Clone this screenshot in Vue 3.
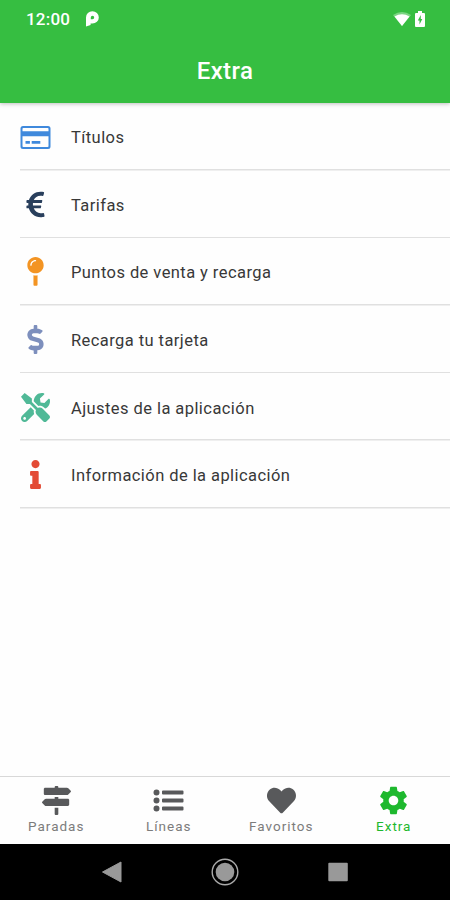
<template>
  <div class="screen">
    <header class="header">
      <div class="status-bar">
        <span class="clock">12:00</span>
        <svg class="status-p" viewBox="0 0 13 16">
          <path
            d="M0 15.5V6.4A6.4 6.2 0 1 1 6.4 12.6H4.6V14ZM6.5 4.8A1.7 1.7 0 0 0 4.8 6.5V8.2H6.5A1.7 1.7 0 0 0 6.5 4.8Z"
            fill="currentColor"
            fill-rule="evenodd"
          />
        </svg>
        <div class="status-icons">
          <svg class="wifi" viewBox="0 0 18 14">
            <path d="M0 3Q9-3 18 3L9 14Z" fill="currentColor" opacity="0.35" />
            <path d="M1.5 4.6Q9 0 16.5 4.6L9 14Z" fill="currentColor" />
          </svg>
          <svg class="battery" viewBox="0 0 10 16">
            <path
              d="M3 0h4v2h2q1 0 1 1v12q0 1-1 1H1q-1 0-1-1V3q0-1 1-1h2ZM5.8 4L2.8 9.4h1.7V13.5L7.3 8H5.8Z"
              fill="currentColor"
              fill-rule="evenodd"
            />
          </svg>
        </div>
      </div>
      <h1 class="title">Extra</h1>
    </header>

    <ul class="list">
      <li v-for="item in items" :key="item.label" class="row">
        <svg class="row-icon" :class="item.icon" :viewBox="item.viewBox">
          <path :d="item.path" fill="currentColor" fill-rule="evenodd" />
        </svg>
        <div class="row-label">{{ item.label }}</div>
      </li>
    </ul>

    <nav class="tabs">
      <button
        v-for="tab in tabs"
        :key="tab.label"
        class="tab"
        :class="{ active: tab.label === current }"
        @click="current = tab.label"
      >
        <svg class="tab-icon" :viewBox="tab.viewBox">
          <path :d="tab.path" fill="currentColor" />
        </svg>
        <span>{{ tab.label }}</span>
      </button>
    </nav>

    <div class="system-nav">
      <svg viewBox="0 0 30 30">
        <path d="M4.5 15L23 5v20Z" fill="#999" stroke="#999" stroke-linejoin="round" />
      </svg>
      <svg viewBox="0 0 30 30">
        <circle cx="15" cy="15" r="12.8" fill="none" stroke="#aaa" stroke-width="1.4" />
        <circle cx="15" cy="15" r="9.3" fill="#999" />
      </svg>
      <svg viewBox="0 0 30 30">
        <rect x="5.3" y="5.8" width="19.5" height="18.5" rx="1" fill="#999" />
      </svg>
    </div>
  </div>
</template>

<script setup>
import { ref } from "vue";

const current = ref("Extra");

const items = [
  {
    label: "Títulos",
    icon: "card",
    viewBox: "0 0 30 29",
    path: "M2.5 4h25q2.5 0 2.5 2.5v18q0 2.5-2.5 2.5h-25Q0 27 0 24.5v-18Q0 4 2.5 4ZM2.8 6q-.8 0-.8.8v2.4h26V6.8q0-.8-.8-.8ZM2 14.2v10q0 .8.8.8h24.4q.8 0 .8-.8v-10ZM5 19h4.4v2.8H5ZM11.2 19h8.6v2.8h-8.6Z",
  },
  {
    label: "Tarifas",
    icon: "euro",
    viewBox: "0 0 320 512",
    path: "M310.706 413.765c-1.314-6.63-7.835-10.872-14.424-9.369-10.692 2.439-27.422 5.413-45.426 5.413-56.763 0-101.929-34.79-121.461-85.449h113.689a12 12 0 0 0 11.708-9.369l6.373-28.36c1.686-7.502-4.019-14.631-11.708-14.631H115.22c-1.21-14.328-1.414-28.287.137-42.245H261.95a12 12 0 0 0 11.723-9.434l6.512-29.755c1.638-7.484-4.061-14.566-11.723-14.566H130.184c20.633-44.991 62.69-75.03 117.619-75.03 14.486 0 28.564 2.25 37.851 4.145 6.216 1.268 12.347-2.498 14.002-8.623l11.991-44.368c1.822-6.741-2.465-13.616-9.326-14.917C290.217 34.912 270.71 32 249.635 32 152.451 32 74.03 92.252 45.075 176H12c-6.627 0-12 5.373-12 12v29.755c0 6.627 5.373 12 12 12h21.569c-1.009 13.607-1.181 29.287-.181 42.245H12c-6.627 0-12 5.373-12 12v28.36c0 6.627 5.373 12 12 12h30.114C67.139 414.692 145.264 480 249.635 480c26.301 0 48.562-4.544 61.101-7.788 6.167-1.595 10.027-7.708 8.788-13.957l-8.818-44.49z",
  },
  {
    label: "Puntos de venta y recarga",
    icon: "pin",
    viewBox: "0 0 288 512",
    path: "M108 322V490q0 16 16 16H164q16 0 16-16V322c-12 3-24 4-36 4s-24-1-36-4zM144 0C64.47 0 0 64.47 0 144s64.47 144 144 144 144-64.47 144-144S223.53 0 144 0zm0 76c-37.5 0-68 30.5-68 68 0 6.62-5.38 12-12 12s-12-5.38-12-12c0-50.73 41.28-92 92-92 6.62 0 12 5.38 12 12s-5.38 12-12 12z",
  },
  {
    label: "Recarga tu tarjeta",
    icon: "dollar",
    viewBox: "0 0 288 512",
    path: "M209.2 233.4l-108-31.6C88.7 198.2 80 186.5 80 173.5c0-16.3 13.2-29.5 29.5-29.5h66.3c12.2 0 24.2 3.7 34.2 10.5 6.1 4.1 14.3 3.1 19.5-2l34.8-34c7.1-6.9 6.1-18.4-1.8-24.5C238 74.8 207.4 64.1 176 64V16c0-8.8-7.2-16-16-16h-32c-8.8 0-16 7.2-16 16v48h-2.5C45.8 64-5.4 118.7.5 183.6c4.2 46.1 39.4 83.6 83.8 96.6l102.5 30c12.5 3.7 21.2 15.3 21.2 28.3 0 16.3-13.2 29.5-29.5 29.5h-66.3C100 368 88 364.3 78 357.5c-6.1-4.1-14.3-3.1-19.5 2l-34.8 34c-7.1 6.9-6.1 18.4 1.8 24.5 24.5 19.2 55.1 29.9 86.5 30v48c0 8.8 7.2 16 16 16h32c8.8 0 16-7.2 16-16v-48.2c46.6-.9 90.3-28.6 105.7-72.7 21.5-61.6-14.6-124.8-72.5-141.7z",
  },
  {
    label: "Ajustes de la aplicación",
    icon: "tools",
    viewBox: "0 0 512 512",
    path: "M501.1 395.7L384 278.6c-23.1-23.1-57.6-27.6-85.4-13.9L192 158.1V96L64 0 0 64l96 128h62.1l106.6 106.6c-13.6 27.8-9.2 62.3 13.9 85.4l117.1 117.1c14.6 14.6 38.2 14.6 52.7 0l52.7-52.7c14.5-14.6 14.5-38.2 0-52.7zM331.7 225c28.3 0 54.9 11 74.9 31l19.4 19.4c15.8-6.9 30.8-16.5 43.8-29.5 37.1-37.1 49.7-89.3 37.9-136.7-2.2-9-13.5-12.1-20.1-5.5l-74.4 74.4-67.9-11.3L334 98.9l74.4-74.4c6.6-6.6 3.4-17.9-5.7-20.2-47.4-11.7-99.6.9-136.6 37.9-28.5 28.5-41.9 66.1-41.2 103.6l82.1 82.1c8.1-1.9 16.5-2.9 24.7-2.9zm-103.9 82l-56.7-56.7L18.7 402.8c-25 25-25 65.5 0 90.5s65.5 25 90.5 0l123.6-123.6c-7.6-19.9-9.9-41.6-5-62.7zM64 472c-13.2 0-24-10.8-24-24 0-13.3 10.7-24 24-24s24 10.7 24 24c0 13.2-10.7 24-24 24z",
  },
  {
    label: "Información de la aplicación",
    icon: "info",
    viewBox: "0 0 192 512",
    path: "M20 424.229h20V279.771H20c-11.046 0-20-8.954-20-20V212c0-11.046 8.954-20 20-20h112c11.046 0 20 8.954 20 20v212.229h20c11.046 0 20 8.954 20 20V492c0 11.046-8.954 20-20 20H20c-11.046 0-20-8.954-20-20v-47.771c0-11.046 8.954-20 20-20zM96 0C56.235 0 24 32.235 24 72s32.235 72 72 72 72-32.235 72-72S135.764 0 96 0z",
  },
];

const tabs = [
  {
    label: "Paradas",
    viewBox: "0 0 512 512",
    path: "M507.31 84.69L464 41.37c-6-6-14.14-9.37-22.63-9.37H288V16c0-8.84-7.16-16-16-16h-32c-8.84 0-16 7.16-16 16v16H56c-13.25 0-24 10.75-24 24v80c0 13.25 10.75 24 24 24h385.37c8.49 0 16.62-3.37 22.63-9.37l43.31-43.31c6.25-6.26 6.25-16.38 0-22.63zM224 496c0 8.84 7.16 16 16 16h32c8.84 0 16-7.16 16-16V384h-64v112zm232-272H288v-32h-64v32H70.63c-8.49 0-16.62 3.37-22.63 9.37L4.69 276.69c-6.25 6.25-6.25 16.38 0 22.63L48 342.63c6 6 14.14 9.37 22.63 9.37H456c13.25 0 24-10.75 24-24v-80c0-13.25-10.75-24-24-24z",
  },
  {
    label: "Líneas",
    viewBox: "0 0 30 29",
    path: "M0 6.5a3 3 0 1 0 6 0a3 3 0 1 0-6 0M0 14.5a3 3 0 1 0 6 0a3 3 0 1 0-6 0M0 22.5a3 3 0 1 0 6 0a3 3 0 1 0-6 0M9.5 4.6h19.5q1 0 1 1v1.8q0 1-1 1H9.5q-1 0-1-1V5.6q0-1 1-1M9.5 12.6h19.5q1 0 1 1v1.8q0 1-1 1H9.5q-1 0-1-1v-1.8q0-1 1-1M9.5 20.6h19.5q1 0 1 1v1.8q0 1-1 1H9.5q-1 0-1-1v-1.8q0-1 1-1",
  },
  {
    label: "Favoritos",
    viewBox: "0 0 512 512",
    path: "M462.3 62.6C407.5 15.9 326 24.3 275.7 76.2L256 96.5l-19.7-20.3C186.1 24.3 104.5 15.9 49.7 62.6c-62.8 53.6-66.1 149.8-9.9 207.9l193.5 199.8c12.5 12.9 32.8 12.9 45.3 0l193.5-199.8c56.3-58.1 53-154.3-9.8-207.9z",
  },
  {
    label: "Extra",
    viewBox: "1.4 1.4 21.2 21.2",
    path: "M19.43 12.98c.04-.32.07-.64.07-.98s-.03-.66-.07-.98l2.11-1.65c.19-.15.24-.42.12-.64l-2-3.46c-.12-.22-.39-.3-.61-.22l-2.49 1c-.52-.4-1.08-.73-1.69-.98l-.38-2.65C14.46 2.18 14.25 2 14 2h-4c-.25 0-.46.18-.49.42l-.38 2.65c-.61.25-1.17.59-1.69.98l-2.49-1c-.23-.09-.49 0-.61.22l-2 3.46c-.13.22-.07.49.12.64l2.11 1.65c-.04.32-.07.65-.07.98s.03.66.07.98l-2.11 1.65c-.19.15-.24.42-.12.64l2 3.46c.12.22.39.3.61.22l2.49-1c.52.4 1.08.73 1.69.98l.38 2.65c.03.24.24.42.49.42h4c.25 0 .46-.18.49-.42l.38-2.65c.61-.25 1.17-.59 1.69-.98l2.49 1c.23.09.49 0 .61-.22l2-3.46c.12-.22.07-.49-.12-.64l-2.11-1.65zM12 15.5c-1.93 0-3.5-1.57-3.5-3.5s1.57-3.5 3.5-3.5 3.5 1.57 3.5 3.5-1.57 3.5-3.5 3.5z",
  },
];
</script>

<style>
body {
  margin: 0;
  background: #fff;
}
</style>

<style scoped>
.screen {
  display: flex;
  flex-direction: column;
  width: 450px;
  height: 900px;
  overflow: hidden;
  background: #fefefe;
  font-family: Roboto, sans-serif;
}
.header {
  height: 103px;
  flex: none;
  color: #fff;
  background: #36be41;
  box-shadow: 0 1px 4px rgba(0, 0, 0, 0.25);
}
.status-bar {
  display: flex;
  align-items: center;
  height: 38px;
  padding: 0 25px 0 26px;
}
.clock {
  font-size: 17px;
  font-weight: 500;
  letter-spacing: 0.2px;
}
.status-p {
  width: 13px;
  height: 16px;
  margin-left: 16px;
}
.status-icons {
  display: flex;
  align-items: center;
  gap: 4px;
  margin-left: auto;
}
.wifi {
  width: 18px;
  height: 14px;
}
.battery {
  width: 10px;
  height: 16px;
}
.title {
  margin: 0;
  font-size: 24px;
  font-weight: 500;
  line-height: 67px;
  letter-spacing: 0.4px;
  text-align: center;
}
.list {
  flex: 1;
  margin: 0;
  padding: 0;
  list-style: none;
}
.row {
  display: flex;
  align-items: center;
  height: 67.6px;
  padding-left: 20px;
  background: linear-gradient(#e0e0e0, #e0e0e0) 20px 100% / 100% 1.5px no-repeat;
}
.row-icon {
  flex: none;
  width: 31px;
  height: 29px;
}
.row-label {
  flex: 1;
  padding: 2px 0 0 20px;
  color: #383838;
  font-size: 16.5px;
  letter-spacing: 0.43px;
}
.card {
  color: #3f89dc;
}
.euro {
  color: #293f5c;
}
.pin {
  color: #f39423;
}
.dollar {
  color: #7d8fbd;
}
.tools {
  color: #50b997;
}
.info {
  color: #e34b35;
}
.tabs {
  display: flex;
  box-sizing: border-box;
  height: 68px;
  border-top: 1.5px solid #d8d8d8;
}
.tab {
  flex: 1;
  display: flex;
  flex-direction: column;
  align-items: center;
  padding: 9px 0 0;
  border: 0;
  background: none;
  color: #58595b;
  font-family: inherit;
  font-size: 13.5px;
  letter-spacing: 1px;
}
.tab span {
  margin-top: 2px;
  line-height: 18px;
  color: #7c7c7c;
}
.tab.active,
.tab.active span {
  color: #1eb82e;
}
.tab-icon {
  width: 31px;
  height: 29px;
}
.system-nav {
  display: flex;
  justify-content: center;
  align-items: center;
  gap: 82.5px;
  height: 56px;
  background: #000;
}
.system-nav svg {
  width: 30px;
  height: 30px;
}
</style>
